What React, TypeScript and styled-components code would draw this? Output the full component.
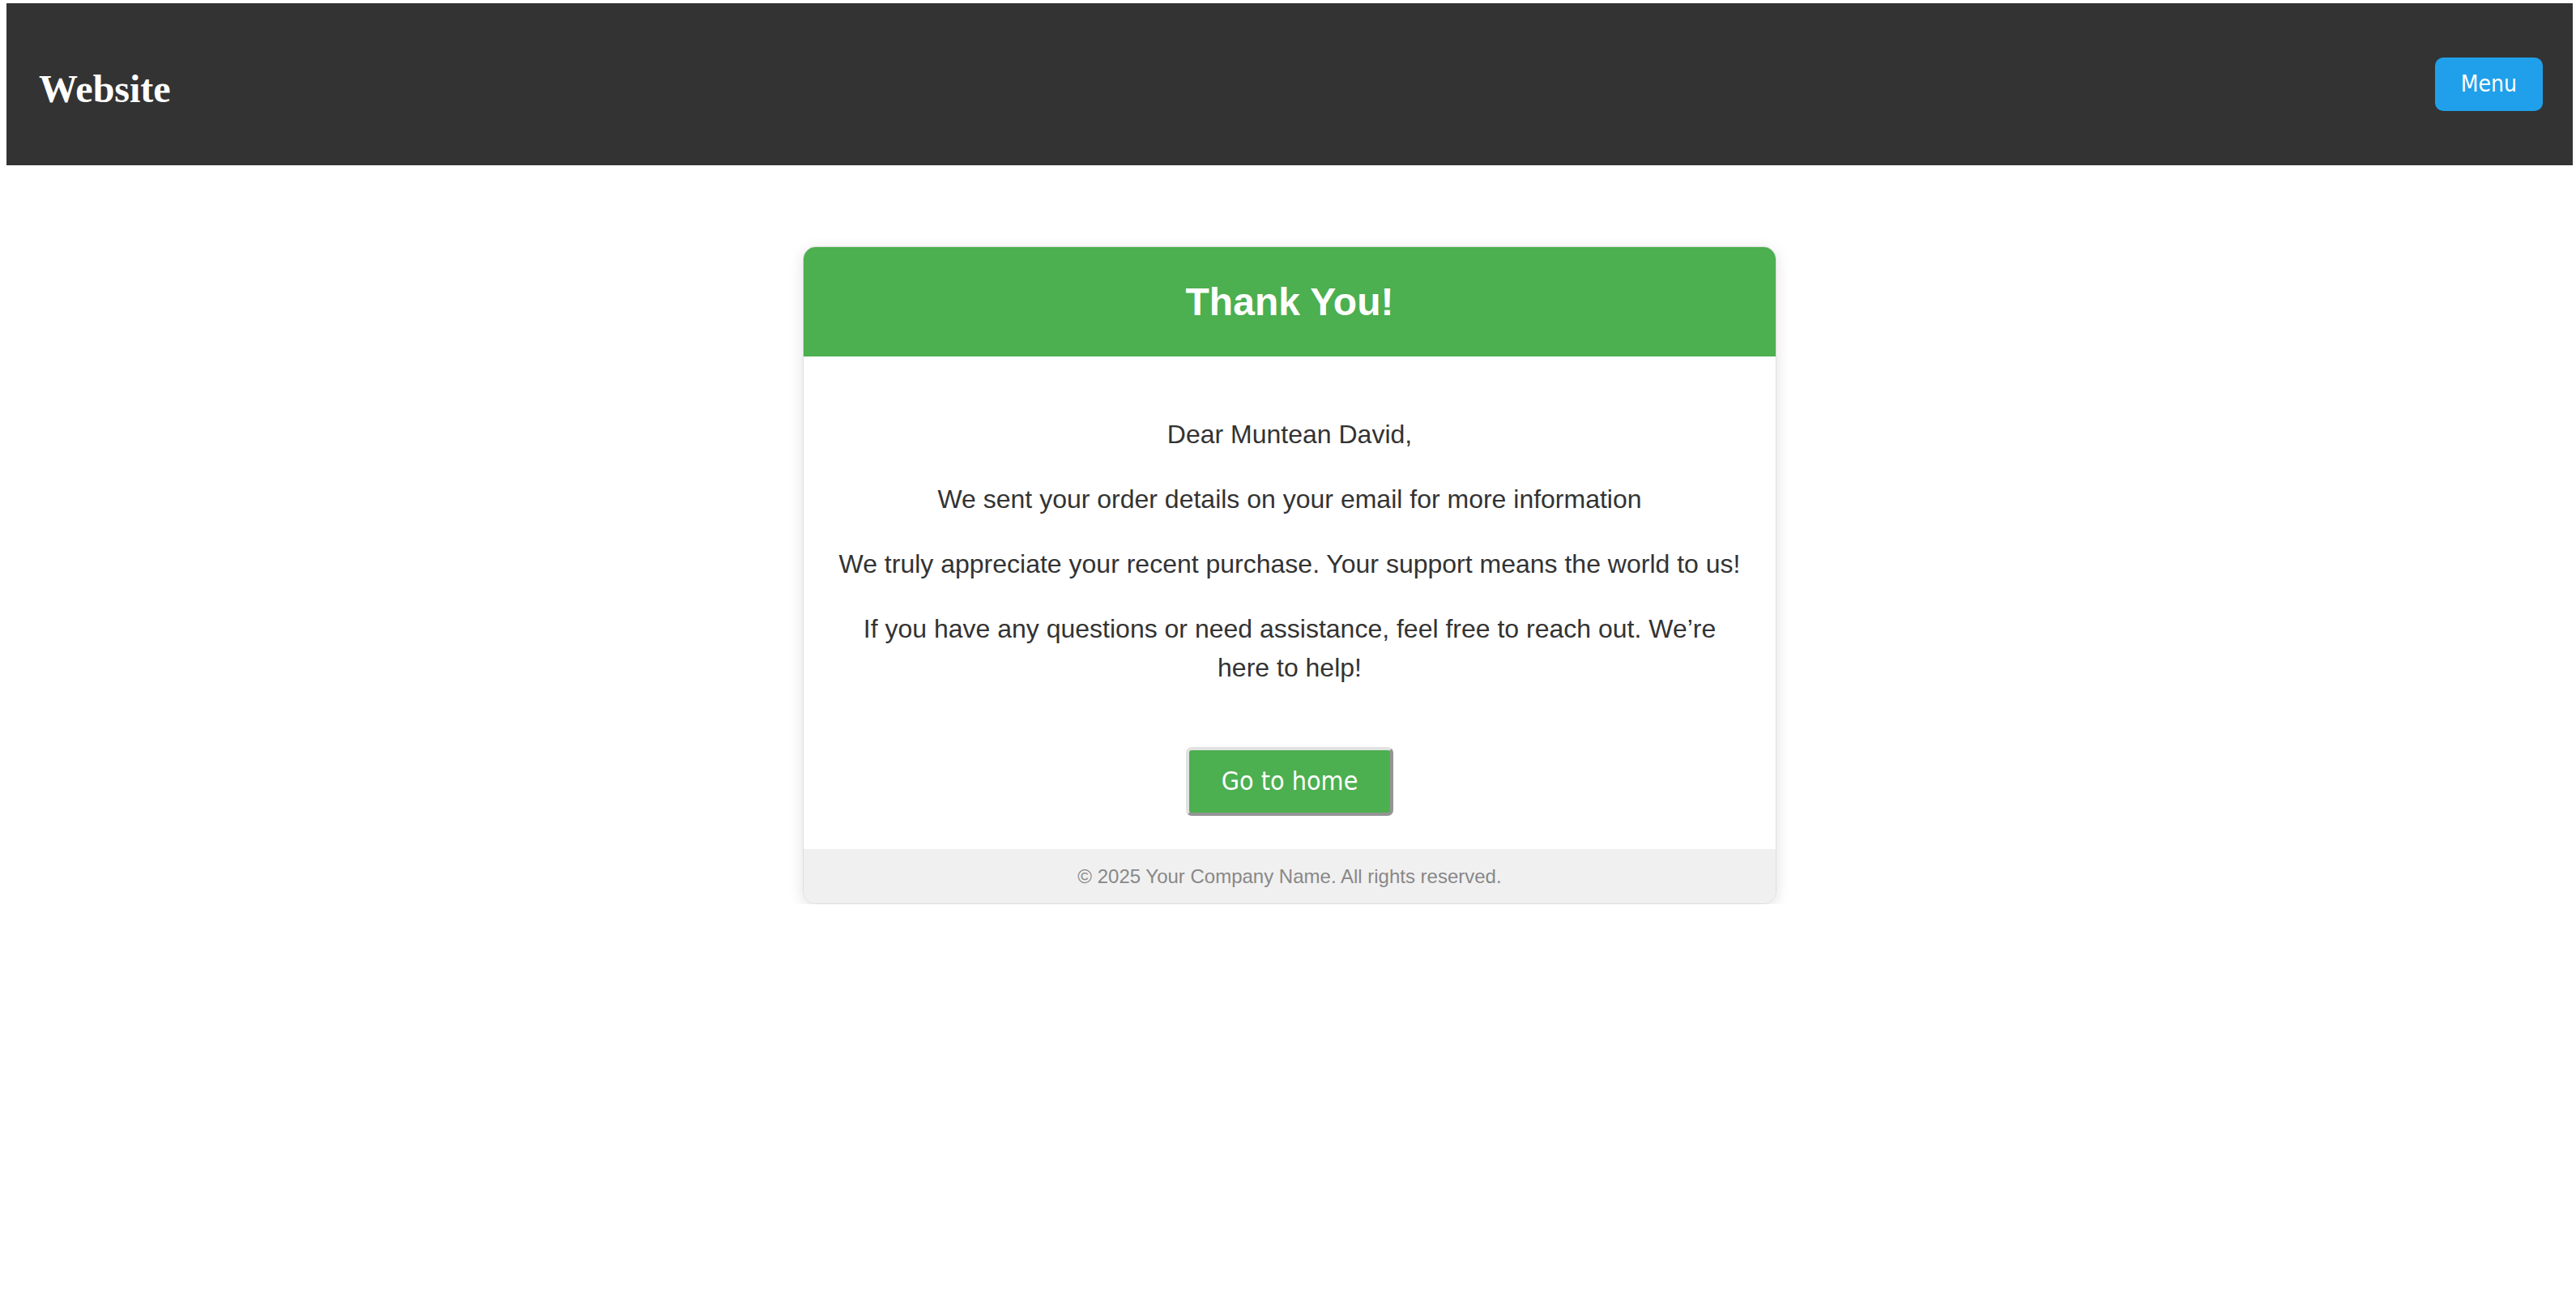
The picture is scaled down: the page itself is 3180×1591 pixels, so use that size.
import React from "react";
import styled, { createGlobalStyle } from "styled-components";

const GlobalStyle = createGlobalStyle`
  html, body {
    margin: 0;
    padding: 0;
    background: #ffffff;
  }
  body {
    font-family: "Liberation Sans", Arial, sans-serif;
  }
  * {
    box-sizing: border-box;
  }
`;

const Page = styled.div`
  padding: 4px 4px 0 8px;
`;

const TopBar = styled.header`
  display: flex;
  align-items: center;
  justify-content: space-between;
  height: 200px;
  padding: 0 37px 0 40px;
  background: #333333;
`;

const Brand = styled.h1`
  margin: 0;
  padding-top: 12px;
  font-family: "Liberation Serif", "Times New Roman", serif;
  font-size: 48px;
  font-weight: 700;
  line-height: 1.15;
  color: #ffffff;
`;

const MenuButton = styled.button`
  border: none;
  border-radius: 10px;
  padding: 16px 32px;
  background: #20a0ea;
  color: #ffffff;
  font-family: "DejaVu Sans Condensed", "DejaVu Sans", sans-serif;
  font-size: 28px;
  line-height: 34px;
  cursor: pointer;
`;

const Card = styled.section`
  width: 1202px;
  margin: 100px auto 0;
  border: 1px solid #dddddd;
  border-radius: 16px;
  overflow: hidden;
  background: #ffffff;
  box-shadow: 0 4px 18px rgba(0, 0, 0, 0.12);
`;

const CardHeader = styled.div`
  padding: 40px;
  background: #4caf50;
  text-align: center;
`;

const CardTitle = styled.h2`
  margin: 0;
  font-family: "Liberation Sans", Arial, sans-serif;
  font-size: 48px;
  font-weight: 700;
  line-height: 1.15;
  color: #ffffff;
`;

const CardBody = styled.div`
  padding: 40px 40px 41px;
  text-align: center;
`;

const Paragraph = styled.p`
  margin: 32px 0;
  font-family: "Liberation Sans", Arial, sans-serif;
  font-size: 32px;
  line-height: 48px;
  color: #333333;
`;

const ActionRow = styled.div`
  display: flex;
  justify-content: center;
  margin-top: 74px;
`;

const HomeButton = styled.button`
  padding: 20px 40px;
  border-width: 4px;
  border-style: solid;
  border-color: #e2e2e2 #959595 #959595 #e2e2e2;
  border-radius: 7px;
  background: #4caf50;
  color: #ffffff;
  font-family: "DejaVu Sans Condensed", "DejaVu Sans", sans-serif;
  font-size: 32px;
  line-height: 37px;
  cursor: pointer;
`;

const CardFooter = styled.footer`
  padding: 20px;
  background: #f0f0f0;
  text-align: center;
  font-family: "Liberation Sans", Arial, sans-serif;
  font-size: 24px;
  line-height: 27px;
  color: #888888;
`;

export default function App() {
  return (
    <>
      <GlobalStyle />
      <Page>
        <TopBar>
          <Brand>Website</Brand>
          <MenuButton type="button">Menu</MenuButton>
        </TopBar>
        <Card>
          <CardHeader>
            <CardTitle>Thank You!</CardTitle>
          </CardHeader>
          <CardBody>
            <Paragraph>Dear Muntean David,</Paragraph>
            <Paragraph>We sent your order details on your email for more information</Paragraph>
            <Paragraph>
              We truly appreciate your recent purchase. Your support means the world to us!
            </Paragraph>
            <Paragraph>
              If you have any questions or need assistance, feel free to reach out. We’re here to
              help!
            </Paragraph>
            <ActionRow>
              <HomeButton type="button">Go to home</HomeButton>
            </ActionRow>
          </CardBody>
          <CardFooter>© 2025 Your Company Name. All rights reserved.</CardFooter>
        </Card>
      </Page>
    </>
  );
}
